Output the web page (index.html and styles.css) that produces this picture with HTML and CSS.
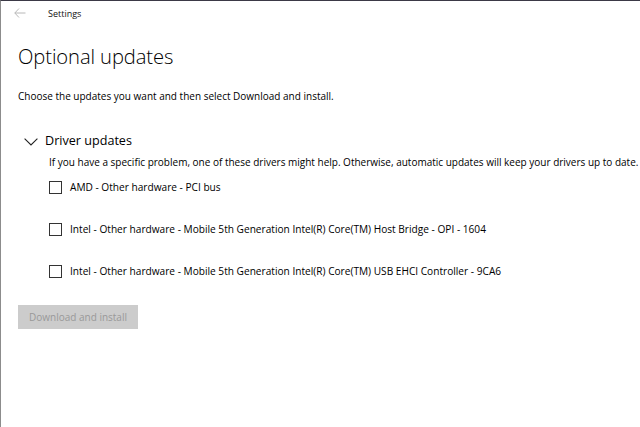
FILE: index.html
```html
<!DOCTYPE html>
<html>
<head>
<meta charset="utf-8">
<link rel="stylesheet" href="styles.css">
</head>
<body>
<div class="window">
  <div class="titlebar">
    <svg class="back" width="12" height="10" viewBox="0 0 12 10"><path d="M5 0.5 L0.8 5 L5 9.5 M0.8 5 H11.5" fill="none" stroke="#b8b8b8" stroke-width="1"/></svg>
    <span class="app">Settings</span>
  </div>
  <main class="content">
    <h1 class="title">Optional updates</h1>
    <p class="intro">Choose the updates you want and then select Download and install.</p>
    <section class="group">
      <div class="group-head">
        <svg class="chev" width="14" height="8" viewBox="0 0 14 8"><path d="M0.6 0.6 L7 7 L13.4 0.6" fill="none" stroke="#222" stroke-width="1.1"/></svg>
        <span class="group-title">Driver updates</span>
      </div>
      <p class="desc">If you have a specific problem, one of these drivers might help. Otherwise, automatic updates will keep your drivers up to date.</p>
      <ul class="list">
        <li class="item"><span class="box"></span><span>AMD - Other hardware - PCI bus</span></li>
        <li class="item"><span class="box"></span><span>Intel - Other hardware - Mobile 5th Generation Intel(R) Core(TM) Host Bridge - OPI - 1604</span></li>
        <li class="item"><span class="box"></span><span>Intel - Other hardware - Mobile 5th Generation Intel(R) Core(TM) USB EHCI Controller - 9CA6</span></li>
      </ul>
    </section>
    <div class="actions"><button class="btn" disabled>Download and install</button></div>
  </main>
</div>
</body>
</html>
```
FILE: styles.css
```css
html, body { margin: 0; padding: 0; background: #fff; }
body { font-family: "Open Sans", "Noto Sans", sans-serif; color: #000; }
.window {
  width: 640px; height: 427px; box-sizing: border-box;
  border-top: 1px solid #3b3946; border-left: 1px solid #8c8c8c;
  overflow: hidden;
}
.titlebar { height: 25px; display: flex; align-items: center; padding-left: 13px; }
.back { margin-right: 22px; margin-top: -1px; }
.app { font-size: 9px; color: #111; margin-top: -1px; }
.content { padding-left: 17px; }
.title { margin: 15px 0 0; font-size: 20.2px; font-weight: 300; line-height: 30px; letter-spacing: -0.1px; }
.intro { margin: 18px 0 0; font-size: 10px; line-height: 14px; }
.group { margin-top: 27px; }
.group-head { display: flex; align-items: center; padding-left: 6px; height: 20px; }
.chev { margin-right: 7px; margin-top: 3px; }
.group-title { font-size: 12.6px; }
.desc { margin: 5px 0 0 31px; font-size: 10px; line-height: 14px; white-space: nowrap; }
.list { list-style: none; margin: 11px 0 0 31px; padding: 0; }
.item { display: flex; align-items: center; height: 14px; font-size: 10.15px; margin-bottom: 28px; }
.item:last-child { margin-bottom: 0; }
.box { width: 11px; height: 11px; border: 1px solid #333; margin-right: 8px; flex: none; }
.actions { margin-top: 26px; }
.btn {
  font-family: inherit; font-size: 10px; color: #999; background: #ccc;
  border: 0; width: 120px; height: 24px; padding: 0;
}
```
